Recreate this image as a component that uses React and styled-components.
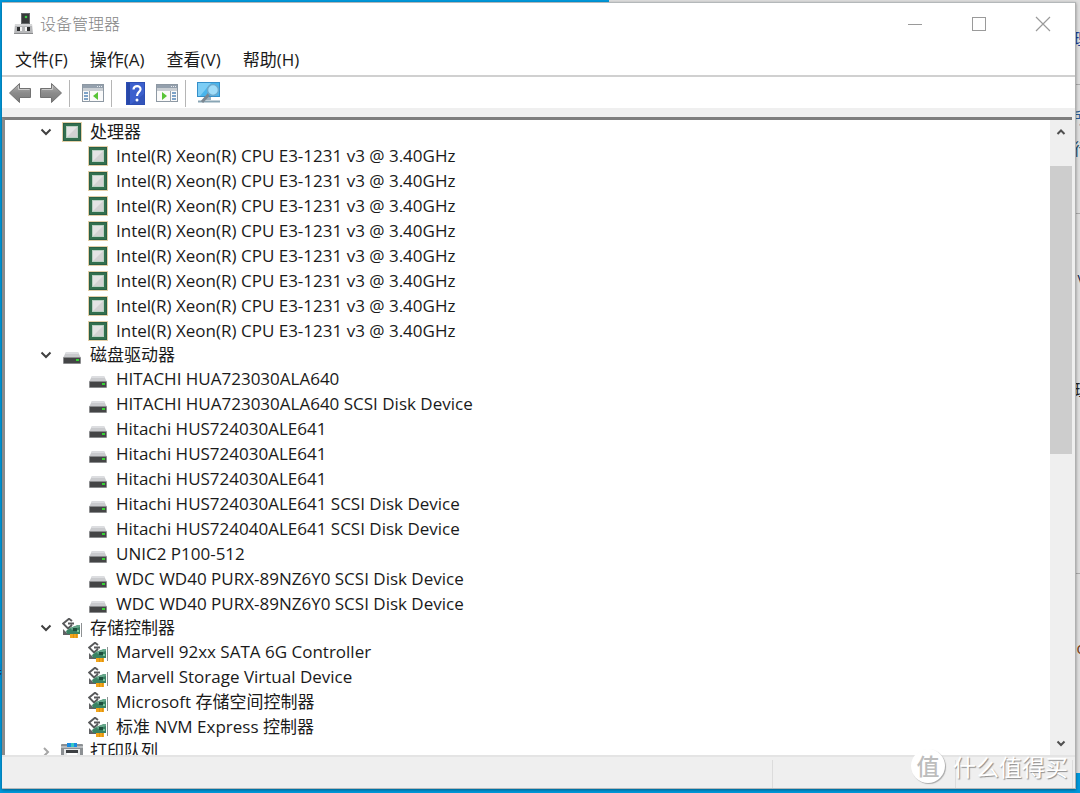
import React from "react";
import styled, { createGlobalStyle } from "styled-components";

const tree = [
  {
    name: "处理器",
    icon: "cpu",
    open: true,
    items: Array(8).fill("Intel(R) Xeon(R) CPU E3-1231 v3 @ 3.40GHz"),
  },
  {
    name: "磁盘驱动器",
    icon: "disk",
    open: true,
    items: [
      "HITACHI HUA723030ALA640",
      "HITACHI HUA723030ALA640 SCSI Disk Device",
      "Hitachi HUS724030ALE641",
      "Hitachi HUS724030ALE641",
      "Hitachi HUS724030ALE641",
      "Hitachi HUS724030ALE641 SCSI Disk Device",
      "Hitachi HUS724040ALE641 SCSI Disk Device",
      "UNIC2 P100-512",
      "WDC WD40 PURX-89NZ6Y0 SCSI Disk Device",
      "WDC WD40 PURX-89NZ6Y0 SCSI Disk Device",
    ],
  },
  {
    name: "存储控制器",
    icon: "storage",
    open: true,
    items: [
      "Marvell 92xx SATA 6G Controller",
      "Marvell Storage Virtual Device",
      "Microsoft 存储空间控制器",
      "标准 NVM Express 控制器",
    ],
  },
  { name: "打印队列", icon: "printer", open: false, items: [] },
];

const CpuIcon = () => (
  <svg width="22" height="22" viewBox="0 0 22 22" aria-hidden="true">
    <rect x="1.5" y="1.5" width="19" height="19" fill="none" stroke="#c8a050" strokeDasharray="1 1" />
    <rect x="2" y="2" width="18" height="18" fill="#33704f" />
    <rect x="2.5" y="2.5" width="17" height="17" fill="none" stroke="#2a5f45" />
    <rect x="5.5" y="5.5" width="11" height="11" fill="#e4e4e4" stroke="#b9d0c2" />
    <path d="M6 16 16 6v10z" fill="#d2d2d2" />
  </svg>
);

const DiskIcon = () => (
  <svg width="20" height="20" viewBox="0 0 20 20" aria-hidden="true">
    <path d="M4 7h12l3 6H1z" fill="#c9cacd" />
    <path d="M4 7h12l1 2H3z" fill="#dcdde0" />
    <rect x="1" y="12" width="18" height="7" rx="1" fill="#8a8b8d" />
    <rect x="2" y="13" width="16" height="5" fill="#444546" />
    <rect x="14" y="14" width="3" height="2" fill="#35d432" />
  </svg>
);

const StorageIcon = () => (
  <svg width="20" height="20" viewBox="0 0 20 20" aria-hidden="true">
    <path d="M10 3 7 .8 1.2 5.6 6 10.4 10 7M6 5.5h6" fill="none" stroke="#58595b" strokeWidth="2" />
    <path d="M1 11v6h7v-2H5z" fill="#606164" />
    <path d="M8 10l8-3h2v9H5l-1-3z" fill="#398263" />
    <path d="M8 10l8-3h2v2l-8 3z" fill="#65a68a" />
    <rect x="11" y="10" width="4" height="3" fill="#1e4e3c" />
    <rect x="15" y="12" width="2" height="2" fill="#7cc39a" />
    <path d="M19.5 5v14" stroke="#8e9193" />
    <rect x="8" y="16" width="8" height="4" fill="#f2a51c" />
    <path d="M11.5 16v4M14.5 16v4" stroke="#ce850c" strokeWidth=".6" />
  </svg>
);

const PrinterIcon = () => (
  <svg width="22" height="20" viewBox="0 0 22 20" aria-hidden="true">
    <rect x="0" y="3" width="22" height="15" rx="1" fill="#8c9093" />
    <rect x="0" y="5" width="22" height="2" fill="#b9bdc0" />
    <rect x="6" y="2" width="10" height="4" fill="#1b8ce2" />
    <rect x="10" y="2" width="3" height="4" fill="#38c8c0" />
    <rect x="3" y="8" width="16" height="10" fill="#e7e9ea" />
    <rect x="5" y="9" width="12" height="3" fill="#3d4043" />
    <rect x="6" y="12" width="10" height="6" fill="#fff" />
  </svg>
);

const icons = {
  cpu: CpuIcon,
  disk: DiskIcon,
  storage: StorageIcon,
  printer: PrinterIcon,
};

const Chevron = ({ dir = "down", color = "#404040" }) => {
  const paths = {
    down: "M1.5 3.5 6 8l4.5-4.5",
    up: "M2.5 8 6 4.5 9.5 8",
    small: "M2.5 4.5 6 8l3.5-3.5",
    right: "M4 3l4 4-4 4",
  };
  return (
    <svg width="12" height="12" viewBox="0 0 12 12" aria-hidden="true">
      <path d={paths[dir]} fill="none" stroke={color} strokeWidth="2" />
    </svg>
  );
};

const AppIcon = () => (
  <svg width="19" height="22" viewBox="0 0 19 22" aria-hidden="true">
    <rect x="7" y="0" width="9" height="12" fill="#66696b" />
    <rect x="8" y="1" width="7" height="9" fill="#37393a" />
    <circle cx="12" cy="4" r="1.3" fill="#3fcf4a" />
    <path d="M1 11h17l1 10H0z" fill="#b7b8ba" />
    <path d="M1 11h17v2H1z" fill="#d6d7d8" />
    <rect x="3" y="14" width="3" height="4" fill="#2c2d2e" />
    <rect x="13" y="14" width="3" height="4" fill="#2c2d2e" />
    <rect x="6" y="14" width="2" height="4" fill="#f4f4f4" />
    <rect x="11" y="14" width="2" height="4" fill="#f4f4f4" />
    <rect x="0" y="20" width="19" height="1" fill="#8b8c8e" />
  </svg>
);

const ArrowIcon = ({ forward }) => (
  <svg width="24" height="22" viewBox="0 0 24 22" aria-hidden="true">
    <defs>
      <linearGradient id="arrow" x1="0" y1="0" x2="0" y2="1">
        <stop offset="0" stopColor="#b4b4b4" />
        <stop offset=".5" stopColor="#8b8b8b" />
        <stop offset="1" stopColor="#7a7a7a" />
      </linearGradient>
    </defs>
    <path
      d={forward ? "M22.5 11 12.5 1.5V6.5H1.5V15.5H12.5V20.5Z" : "M1.5 11 11.5 1.5V6.5H22.5V15.5H11.5V20.5Z"}
      fill="url(#arrow)"
      stroke="#727272"
      strokeLinejoin="round"
    />
    <path
      d={forward ? "M13.5 4V7.5H3" : "M10.5 4V7.5H21.5"}
      fill="none"
      stroke="#c9c9c9"
    />
  </svg>
);

const PaneIcon = ({ right }) => (
  <svg width="24" height="20" viewBox="0 0 24 20" aria-hidden="true">
    <rect x="1.5" y="1.5" width="21" height="17" fill="#fafafa" stroke="#8d98a3" />
    <rect x="2" y="2" width="20" height="3" fill="#94a0ad" />
    <rect x="2" y="5" width="20" height="3" fill="#c9ced3" />
    <path d="M16 3.5h1M18 3.5h1M20 3.5h1" stroke="#e8ecf1" />
    <path d={right ? "M15.5 8v11" : "M8.5 8v11"} stroke="#9aa4ae" />
    <path
      d={right ? "M17 10h4M17 13h4M17 16h4" : "M3 10h4M3 13h4M3 16h4"}
      stroke="#5586b8"
      strokeWidth="1.4"
    />
    <path d={right ? "M7 9v8l5-4z" : "M17 9v8l-5-4z"} fill="#58c437" />
  </svg>
);

const HelpIcon = () => (
  <svg width="19" height="23" viewBox="0 0 19 23" aria-hidden="true">
    <rect x="0.5" y="0.5" width="18" height="22" fill="#3c60cd" stroke="#2d4eb4" />
    <path d="M1 1h3v21H1z" fill="#2747a8" />
    <path d="M18 12v10H5z" fill="#2747a8" opacity=".5" />
    <path d="M7.5 7.5C7.5 3 15 3 14.5 7.500C14.200 10 11 10 11 14" fill="none" stroke="#fff" strokeWidth="2.2" />
    <circle cx="11" cy="18" r="1.5" fill="#fff" />
  </svg>
);

const ScanIcon = () => (
  <svg width="24" height="22" viewBox="0 0 24 22" aria-hidden="true">
    <rect x="0.5" y="0.5" width="22" height="14" fill="#49b5ec" stroke="#358fc9" />
    <path d="M1 1h13L3 14H1z" fill="#7ccdf5" />
    <path d="M9 15h5v3H9z" fill="#9bb0be" />
    <path d="M1 19.5h22" stroke="#88a5b4" strokeWidth="2" />
    <path d="m12 12-7 8" stroke="#7b8791" strokeWidth="3" />
    <circle cx="16" cy="8" r="5.5" fill="#a0dcf8" stroke="#6ba9cd" strokeWidth="1.5" />
  </svg>
);

const DeviceManager = () => {
  return (
    <Window>
      <TitleBar>
        <AppIcon />
        <Title>设备管理器</Title>
        <CaptionButton aria-label="最小化">
          <svg width="16" height="16" viewBox="0 0 16 16">
            <path d="M1 8.500h14" stroke="#9a9a9a" />
          </svg>
        </CaptionButton>
        <CaptionButton aria-label="最大化">
          <svg width="16" height="16" viewBox="0 0 16 16">
            <rect x="1.5" y="1.5" width="13" height="13" fill="none" stroke="#9a9a9a" />
          </svg>
        </CaptionButton>
        <CaptionButton aria-label="关闭">
          <svg width="16" height="16" viewBox="0 0 16 16">
            <path d="m1 1 14 14M15 1 1 15" stroke="#9a9a9a" strokeWidth="1.2" />
          </svg>
        </CaptionButton>
      </TitleBar>
      <MenuBar>
        <MenuButton>文件(F)</MenuButton>
        <MenuButton>操作(A)</MenuButton>
        <MenuButton>查看(V)</MenuButton>
        <MenuButton>帮助(H)</MenuButton>
      </MenuBar>
      <Toolbar>
        <ToolButton aria-label="后退"><ArrowIcon /></ToolButton>
        <ToolButton aria-label="前进"><ArrowIcon forward /></ToolButton>
        <Separator />
        <ToolButton aria-label="显示/隐藏控制台树"><PaneIcon /></ToolButton>
        <Separator />
        <ToolButton aria-label="帮助"><HelpIcon /></ToolButton>
        <ToolButton aria-label="显示/隐藏操作窗格"><PaneIcon right /></ToolButton>
        <Separator />
        <ToolButton aria-label="扫描检测硬件改动"><ScanIcon /></ToolButton>
      </Toolbar>
      <Panel>
        <Tree>
          {tree.map((group) => {
            const Icon = icons[group.icon];
            return (
              <li key={group.name}>
                <GroupRow>
                  <Toggle aria-label={group.name} aria-expanded={group.open}>
                    <Chevron
                      dir={group.open ? "down" : "right"}
                      color={group.open ? "#404040" : "#a6a6a6"}
                    />
                  </Toggle>
                  <IconSlot><Icon /></IconSlot>
                  <span>{group.name}</span>
                </GroupRow>
                <Children>
                  {group.items.map((item, i) => (
                    <ItemRow key={i}>
                      <IconSlot><Icon /></IconSlot>
                      <span>{item}</span>
                    </ItemRow>
                  ))}
                </Children>
              </li>
            );
          })}
        </Tree>
        <ScrollBar>
          <ScrollButton aria-label="向上滚动"><Chevron dir="up" color="#505050" /></ScrollButton>
          <Track>
            <Thumb />
          </Track>
          <ScrollButton aria-label="向下滚动"><Chevron dir="small" color="#505050" /></ScrollButton>
        </ScrollBar>
      </Panel>
      <StatusBar>
        <StatusMain />
        <StatusCell $width={183} />
        <StatusCell $width={117} />
        <StatusCell $width={3} />
      </StatusBar>
    </Window>
  );
};

const App = () => {
  return (
    <React.Fragment>
      <GlobalStyle />
      <Desktop>
        <DesktopLabel>器</DesktopLabel>
        <BackWindow>
          <Rule $top={84} />
          <Rule $top={213} />
          <Rule $top={573} />
          <Snippet $top={28} $right={-9} $color="#1c3f94">理</Snippet>
          <Snippet $top={107} $right={-9} $color="#2b5c94">所</Snippet>
          <Snippet $top={138} $right={-9} $color="#24506f">行</Snippet>
          <Snippet $top={270} $right={-3} $color="#1c2c4c">\</Snippet>
          <Snippet $top={379} $right={-10} $color="#222222">理</Snippet>
          <Snippet $top={637} $right={-6} $color="#7b3b10">o</Snippet>
        </BackWindow>
        <DeviceManager />
        <Watermark>
          <Badge>值</Badge>
          <span>什么值得买</span>
        </Watermark>
      </Desktop>
    </React.Fragment>
  );
};

export default App;

const GlobalStyle = createGlobalStyle`
  * {
    box-sizing: border-box;
  }
  body {
    margin: 0;
    font-family: "Open Sans", "Noto Sans CJK SC", sans-serif;
    font-size: 17px;
    color: #1a1a1a;
  }
  button {
    padding: 0;
    border: 0;
    background: none;
    font: inherit;
    color: inherit;
  }
  svg {
    display: block;
    flex: none;
  }
`;

const Desktop = styled.div`
  position: relative;
  display: flex;
  height: 100vh;
  padding: 2px 4px 4px 2px;
  background: #0099dc;
  overflow: hidden;
`;

const DesktopLabel = styled.span`
  position: absolute;
  top: 660px;
  left: -14px;
  font-size: 16px;
  line-height: 22px;
  color: #16384f;
`;

const BackWindow = styled.div`
  position: absolute;
  top: 0;
  right: 0;
  bottom: 20px;
  width: 471px;
  background: #dedede;
  overflow: hidden;
`;

const Rule = styled.div`
  position: absolute;
  top: ${(props) => props.$top}px;
  right: 0;
  width: 100%;
  height: 1px;
  background: #ababab;
`;

const Snippet = styled.span`
  position: absolute;
  top: ${(props) => props.$top}px;
  right: ${(props) => props.$right}px;
  font-size: 16px;
  line-height: 22px;
  color: ${(props) => props.$color};
`;

const Window = styled.div`
  position: relative;
  flex: 1;
  min-width: 0;
  display: flex;
  flex-direction: column;
  background: #ffffff;
  border-top: 1px solid #b4b8ba;
  border-right: 1px solid #b0b0b0;
  border-bottom: 1px solid #b4b8ba;
  box-shadow: 0 1px 3px rgba(0, 0, 0, 0.4);
`;

const TitleBar = styled.header`
  display: flex;
  align-items: center;
  height: 41px;
  padding-left: 12px;
`;

const Title = styled.h1`
  flex: 1;
  margin: 0 0 0 7px;
  font-size: 16px;
  font-weight: 300;
  line-height: 24px;
  color: #858585;
`;

const CaptionButton = styled.button`
  display: flex;
  justify-content: center;
  width: 64px;
`;

const MenuBar = styled.nav`
  display: flex;
  align-items: center;
  gap: 22px;
  height: 31px;
  padding-left: 13px;
`;

const MenuButton = styled.button`
  line-height: 24px;
`;

const Toolbar = styled.div`
  display: flex;
  align-items: center;
  height: 33px;
  padding: 1px 5px 0;
  border-top: 2px solid #d0d0d0;
`;

const ToolButton = styled.button`
  display: flex;
  align-items: center;
  justify-content: center;
  width: 32px;
  height: 28px;
  &:first-child {
    width: 26px;
    margin-right: 2px;
  }
`;

const Separator = styled.div`
  width: 1px;
  height: 27px;
  margin: 0 7px 0 2px;
  background: #b5b5b5;
`;

const Panel = styled.main`
  flex: 1;
  min-height: 0;
  display: flex;
  padding-right: 3px;
  border-top: 9px solid #efefef;
  background: #efefef;
`;

const Tree = styled.ul`
  flex: 1;
  margin: 0;
  padding: 0 0 0 33px;
  list-style: none;
  overflow: hidden;
  background: #ffffff;
  border-top: 3px solid #7d7d7d;
  border-left: 3px solid #8a8a8a;
`;

const GroupRow = styled.div`
  display: flex;
  align-items: center;
  height: 23px;
  line-height: 23px;
`;

const Toggle = styled.button`
  display: flex;
  justify-content: center;
  width: 16px;
  margin-right: 7px;
`;

const IconSlot = styled.span`
  display: flex;
  justify-content: center;
  width: 22px;
  margin-right: 7px;
`;

const Children = styled.ul`
  margin: 0;
  padding: 0 0 0 49px;
  list-style: none;
`;

const ItemRow = styled.li`
  display: flex;
  align-items: center;
  height: 25px;
  line-height: 25px;
  white-space: nowrap;
`;

const ScrollBar = styled.div`
  display: flex;
  flex-direction: column;
  width: 22px;
  border-top: 3px solid #7d7d7d;
`;

const ScrollButton = styled.button`
  display: flex;
  align-items: center;
  justify-content: center;
  height: 24px;
`;

const Track = styled.div`
  flex: 1;
  padding-top: 22px;
`;

const Thumb = styled.div`
  height: 51%;
  background: #cdcdcd;
`;

const StatusBar = styled.footer`
  display: flex;
  height: 33px;
  padding-top: 3px;
  background: #efefef;
  border-top: 2px solid #e4e4e4;
`;

const StatusMain = styled.div`
  flex: 1;
`;

const StatusCell = styled.div`
  width: ${(props) => props.$width}px;
  border-left: 1px solid #dcdcdc;
`;

const Watermark = styled.div`
  position: absolute;
  right: 12px;
  bottom: 10px;
  display: flex;
  align-items: center;
  gap: 8px;
  font-family: "Noto Sans CJK SC", sans-serif;
  font-size: 23px;
  line-height: 34px;
  color: #ffffff;
  text-shadow: 1px 1px 1px #8c8c8c;
`;

const Badge = styled.span`
  width: 34px;
  height: 34px;
  border-radius: 50%;
  background: #ffffff;
  box-shadow: 1px 1px 1px #a8a8a8;
  font-weight: 500;
  line-height: 32px;
  text-align: center;
  color: #bdbdbd;
  text-shadow: none;
`;
